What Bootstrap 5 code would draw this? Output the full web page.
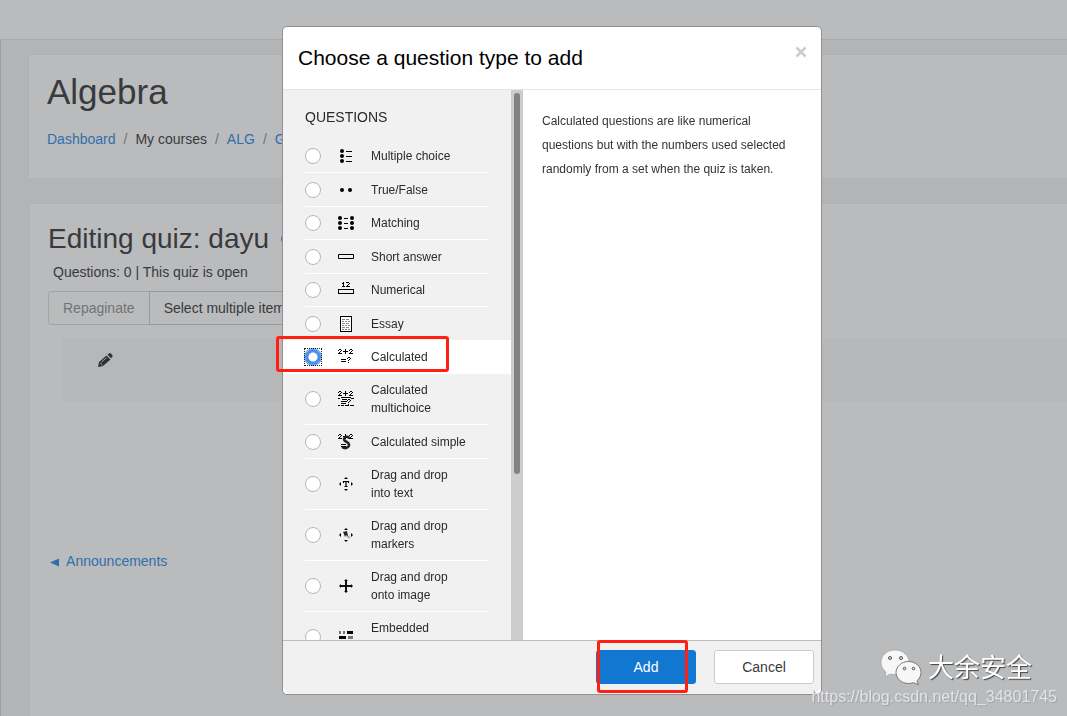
<!DOCTYPE html>
<html lang="en">
<head>
<meta charset="utf-8">
<meta name="viewport" content="width=device-width, initial-scale=1">
<title>Editing quiz: dayu</title>
<link href="https://cdn.jsdelivr.net/npm/bootstrap@5.3.0/dist/css/bootstrap.min.css" rel="stylesheet">
<style>
body{font-family:"Liberation Sans",Arial,sans-serif;font-size:14px;line-height:20px;color:#393a3c;background:#b3b4b6}
.page a{color:#2f70ab;text-decoration:none}
.topbar{height:40px;background:#babbbc;border-bottom:1px solid #a8a9aa}
.main-area{border-left:1px solid #9c9d9f;padding-top:14px}
.panel{background:#babbbd;border:1px solid #b0b1b3;border-right:0}
.course-head{margin-left:27px;padding:16px 18px 29px}
.course-head h1{font-size:35px;line-height:42px;font-weight:400;margin:0 0 16px}
.breadcrumb{--bs-breadcrumb-divider-color:#707173;--bs-breadcrumb-item-padding-x:8px;font-size:14px;flex-wrap:nowrap}
.quiz-panel{margin:24px 0 0 28px;padding:18px 0 0 18px}
.quiz-panel h2{font-size:28px;line-height:34px;font-weight:400;margin:0;gap:12px}
.edit-dot{width:12px;height:12px;background:#b0407c}
.status{padding:6px 5px 9px}
.tool-btn{--bs-btn-font-size:14px;--bs-btn-line-height:20px;--bs-btn-padding-x:14px;--bs-btn-padding-y:6px;--bs-btn-border-color:#98999b;--bs-btn-color:#393a3c;--bs-btn-border-radius:3px;--bs-btn-disabled-border-color:#a2a3a5;--bs-btn-disabled-color:#737476;--bs-btn-disabled-opacity:1}
.slot-box{background:#b6b7b9;height:63px;margin:14px 0 0 14px;padding:10px 36px}
.prev-link{margin-top:149px;padding-left:2px}
.overlay{position:fixed;inset:0;padding:26px 0 21px 37px}
.chooser{position:relative;width:540px;border:1px solid #8f9091;border-radius:5px;background:#fff}
.chooser-head{padding:15px 13px 15px 15px;border-bottom:1px solid #e5e5e5}
.chooser-head h3{font-size:21px;line-height:32px;font-weight:400;margin:0;color:#000}
.x-btn{border:0;background:none;padding:0;width:14px;height:20px;line-height:0}
.types{flex:none;width:240px;background:#f1f1f1;position:relative;overflow:hidden}
.types legend{font-size:14px;line-height:20px;margin:0;padding:17px 22px 13px;color:#282a2e}
.q-type{display:flex;align-items:center;height:34px;margin:0 34px 0 22px;border-bottom:1px solid #fff;color:#282a2e;font-size:12px;line-height:18px}
.q-type:nth-of-type(-n+5):nth-of-type(odd){height:33px}
.q-type.two-line{height:51px}
.q-type.selected{margin:-1px 0 0;padding:0 34px 0 22px;background:#fff}
.q-type input{appearance:none;flex:none;width:16px;height:16px;margin:0;border:1px solid #bcb6b0;border-radius:50%;background:#fff}
.q-type input:checked{border-color:#4a90e8;background:radial-gradient(circle,#fff 0 4px,#4a90e8 5px);box-shadow:0 0 0 1px #4a90e8}
.radio-focus{outline:1px dotted #222;width:16px;height:16px;display:flex;flex:none}
.q-type svg{flex:none;width:16px;height:16px;margin:0 17px}
.q-type span{flex:none;width:98px}
.track{position:absolute;top:0;right:0;bottom:0;width:12px;background:#cdcdcd;padding:3px}
.thumb{width:6px;height:70%;border-radius:3px;background:#7f8382}
.about{font-size:12px;line-height:24px;color:#333;padding:19px}
.chooser-foot{background:#f1f1f1;border-top:1px solid #bbb;border-radius:0 0 9px 9px;padding:9px 7px 10px;gap:18px}
.foot-btn{--bs-btn-font-size:14px;--bs-btn-line-height:20px;--bs-btn-border-radius:3px;width:100px;height:34px}
.add-btn{--bs-btn-bg:#1177d1;--bs-btn-border-color:#1177d1}
.cancel-btn{--bs-btn-bg:#fff;--bs-btn-border-color:#ccc;--bs-btn-color:#373a3c}
.callout{position:absolute;border:3px solid #ff2013;border-radius:3px;pointer-events:none}
.callout-type{left:-7px;top:309px;width:173px;height:36px}
.callout-add{right:133px;bottom:1px;width:91px;height:53px}
.stamp{position:fixed;right:10px;bottom:9px;color:#e2e3e4}
.stamp-name{font-family:"Liberation Sans","Noto Sans CJK SC",sans-serif;font-size:26px;line-height:36px;color:#fff;text-shadow:1px 1px 1px #444;padding-right:25px;gap:6px}
.stamp-url{font-size:16px;line-height:20px;text-shadow:1px 1px 1px #a0a1a3}
</style>
</head>
<body>
<div class="page vh-100 overflow-hidden d-flex flex-column">
  <nav class="topbar flex-shrink-0"></nav>
  <div class="main-area flex-fill d-flex flex-column">
    <header class="panel course-head">
      <h1>Algebra</h1>
      <ol class="breadcrumb mb-0">
        <li class="breadcrumb-item"><a href="#">Dashboard</a></li>
        <li class="breadcrumb-item">My courses</li>
        <li class="breadcrumb-item"><a href="#">ALG</a></li>
        <li class="breadcrumb-item"><a href="#">G</a></li>
      </ol>
    </header>
    <main class="panel quiz-panel flex-fill border-bottom-0">
      <h2 class="d-flex align-items-center">Editing quiz: dayu <i class="edit-dot rounded-circle"></i></h2>
      <div class="status">Questions: 0 | This quiz is open</div>
      <div class="btn-group">
        <button class="btn tool-btn" disabled>Repaginate</button>
        <button class="btn tool-btn">Select multiple items</button>
      </div>
      <div class="slot-box">
        <svg width="15" height="14" viewBox="0 0 15 14" fill="#303133"><path d="M0 14l1-5 7.500-6.500 4 4L5 13z"/><path d="M9.500 1.700L11.200.3q.8-.5 1.600.2l1.500 1.600q.7.800 0 1.600l-1.300 1.500z"/><path d="M2 9.800l2.500 2.400M3.500 9l5-4.300" stroke="#b6b7b9" stroke-width=".8"/></svg>
      </div>
      <div class="prev-link"><a href="#"><svg class="me-1" width="9" height="9" viewBox="0 0 9 9"><path d="M0 4.500L9 .5v8z" fill="#2f70ab"/></svg> Announcements</a></div>
    </main>
  </div>
</div>

<div class="overlay d-flex justify-content-center">
  <form class="chooser d-flex flex-column" role="dialog" aria-labelledby="chooser-title">
    <div class="chooser-head d-flex justify-content-between">
      <h3 id="chooser-title">Choose a question type to add</h3>
      <button type="button" class="x-btn" aria-label="Close"><svg width="12" height="12" viewBox="0 0 12 12"><path d="M1.500 1.500l9 9M10.500 1.500l-9 9" stroke="#ccc" stroke-width="2.500"/></svg></button>
    </div>
    <div class="d-flex flex-fill overflow-hidden">
      <fieldset class="types">
        <legend>QUESTIONS</legend>
        <label class="q-type"><input type="radio" name="qtype"><svg viewBox="0 0 16 16"><circle cx="4" cy="3" r="2"/><circle cx="4" cy="8" r="2"/><circle cx="4" cy="13" r="2"/><path d="M8 3h6v1H8zM8 8h6v1H8zM8 13h6v1H8z"/></svg><span>Multiple choice</span></label>
        <label class="q-type"><input type="radio" name="qtype"><svg viewBox="0 0 16 16"><circle cx="4" cy="8" r="2"/><circle cx="12" cy="8" r="2"/></svg><span>True/False</span></label>
        <label class="q-type"><input type="radio" name="qtype"><svg viewBox="0 0 16 16"><circle cx="2" cy="3" r="2"/><circle cx="2" cy="8" r="2"/><circle cx="2" cy="13" r="2"/><circle cx="14" cy="3" r="2"/><circle cx="14" cy="8" r="2"/><circle cx="14" cy="13" r="2"/><path d="M6 3h4v1H6zM6 8h4v1H6zM6 13h4v1H6z"/></svg><span>Matching</span></label>
        <label class="q-type"><input type="radio" name="qtype"><svg viewBox="0 0 16 16"><path d="M.5 5.500h15v4H.5z" fill="none" stroke="#000"/></svg><span>Short answer</span></label>
        <label class="q-type"><input type="radio" name="qtype"><svg viewBox="0 0 16 16" shape-rendering="crispEdges" fill="none" stroke="#000"><path d="M.5 7.500h15v4H.5zM4 1.500h2M5.500 0v5M4 4.500h3M8 .5h3M11.500 1v1M10 2.500h1M9 3.500h1M8 4.500h4"/></svg><span>Numerical</span></label>
        <label class="q-type"><input type="radio" name="qtype"><svg viewBox="0 0 16 16" shape-rendering="crispEdges"><path d="M2.500.5h11v15h-11z" fill="#fff" stroke="#000"/><path d="M4 3.500h8M4 7.500h8M4 11.500h8" stroke="#888" stroke-dasharray="3 1"/><path d="M4 5.500h8M4 9.500h8M4 13.500h8" stroke="#888" stroke-dasharray="2 1"/></svg><span>Essay</span></label>
        <label class="q-type selected"><i class="radio-focus"><input type="radio" name="qtype" checked></i><svg viewBox="0 0 16 16" shape-rendering="crispEdges" fill="none" stroke="#000"><path id="sum" d="M0 1.500h1M1 .5h2M3.500 1v1M2 2.500h1M1 3.500h1M0 4.500h4M5 2.500h5M7.500 0v5M11 1.500h1M12 .5h2M14.500 1v1M13 2.500h1M12 3.500h1M11 4.500h4"/><path id="ask" d="M3 10.500h5M3 12.500h5M9 9.500h1M10 8.500h2M12.500 9v1M11 10.500h1M10.500 11v1M10.500 13v1"/></svg><span>Calculated</span></label>
        <label class="q-type two-line"><input type="radio" name="qtype"><svg viewBox="0 0 16 16" shape-rendering="crispEdges" fill="none" stroke="#000"><use href="#sum"/><use href="#ask"/><path d="M0 7.500h2M3 6.500h10M4 8.500h5M13 7.500h3M3 10.500h6M0 14.500h2M3 14.500h3M7 14.500h4M12 14.500h4"/></svg><span>Calculated multichoice</span></label>
        <label class="q-type"><input type="radio" name="qtype"><svg viewBox="0 0 16 16"><g shape-rendering="crispEdges" fill="none" stroke="#000"><use href="#sum"/><path d="M3 10.500h5M3 12.500h5"/></g><path d="M11.500 4Q7 1 6 5q0 2 3 3 3 2 1.500 4.500Q8 15.500 4 13" fill="none" stroke="#222" stroke-width="2.500"/></svg><span>Calculated simple</span></label>
        <label class="q-type two-line"><input type="radio" name="qtype"><svg viewBox="0 0 16 16"><path d="M8 1l2 2H6zM8 15l2-2H6zM1 8l2-2v4zM15 8l-2-2v4z"/><path d="M5.500 7V5.500h5V7M8 5.500v5M6.500 10.500h3" fill="none" stroke="#000" stroke-width="1.200"/></svg><span>Drag and drop into text</span></label>
        <label class="q-type two-line"><input type="radio" name="qtype"><svg viewBox="0 0 16 16"><path d="M8 1l2 2H6zM8 15l2-2H6zM1 8l2-2v4zM15 8l-2-2v4z"/><path d="M8 8l4 3" stroke="#aaa" stroke-width="2"/><path d="M5 5l4-1 1 5-2-1-1 2-1-3z" fill="#222"/></svg><span>Drag and drop markers</span></label>
        <label class="q-type two-line"><input type="radio" name="qtype"><svg viewBox="0 0 16 16"><path d="M2 8h12M8 2v12" stroke="#111" stroke-width="2"/><path d="M8 1l2 2H6zM8 15l2-2H6zM1 8l2-2v4zM15 8l-2-2v4z" fill="#111"/></svg><span>Drag and drop onto image</span></label>
        <label class="q-type two-line"><input type="radio" name="qtype"><svg viewBox="0 0 16 16" shape-rendering="crispEdges"><path d="M1 2h2v3H1zM5 2h2v3H5zM10 7h5v3h-5z" fill="#777"/><path d="M9 2h6v3H9zM1 7h7v3H1z"/></svg><span>Embedded<br>&nbsp;</span></label>
        <div class="track"><div class="thumb"></div></div>
      </fieldset>
      <div class="about flex-fill">Calculated questions are like numerical questions but with the numbers used selected randomly from a set when the quiz is taken.</div>
    </div>
    <div class="chooser-foot d-flex justify-content-end">
      <button type="button" class="btn btn-primary foot-btn add-btn">Add</button>
      <button type="button" class="btn foot-btn cancel-btn">Cancel</button>
    </div>
    <div class="callout callout-type"></div>
    <div class="callout callout-add"></div>
  </form>
</div>

<div class="stamp text-end">
  <div class="stamp-name d-flex justify-content-end align-items-center" lang="zh">
    <svg width="42" height="38" viewBox="0 0 42 38"><path d="M15 1C7 1 1 6.500 1 13.500c0 4 2 7 5 9.500l-1 5 5-3c10 2.500 19-3 19-11.500C29 6.500 23 1 15 1z" fill="#f7f7f7" stroke="#999" stroke-width=".6"/><path d="M28.500 12.500C21.500 12.500 16 17.500 16 23.500S21.500 34.500 28.500 34.500c2 0 3.500-.3 5-.8l5 2-1.500-4c2.500-2 4-5 4-8.200 0-6-5.500-11-12.500-11z" fill="#f7f7f7" stroke="#777"/><g fill="#e0e0e0" stroke="#555"><circle cx="10" cy="9" r="1.500"/><circle cx="21" cy="9" r="1.500"/><circle cx="24.500" cy="19.500" r="1.300"/><circle cx="33.500" cy="19.500" r="1.300"/></g></svg>
    <span>大余安全</span>
  </div>
  <div class="stamp-url">https://blog.csdn.net/qq_34801745</div>
</div>
<script src="https://cdn.jsdelivr.net/npm/bootstrap@5.3.0/dist/js/bootstrap.bundle.min.js"></script>
</body>
</html>
